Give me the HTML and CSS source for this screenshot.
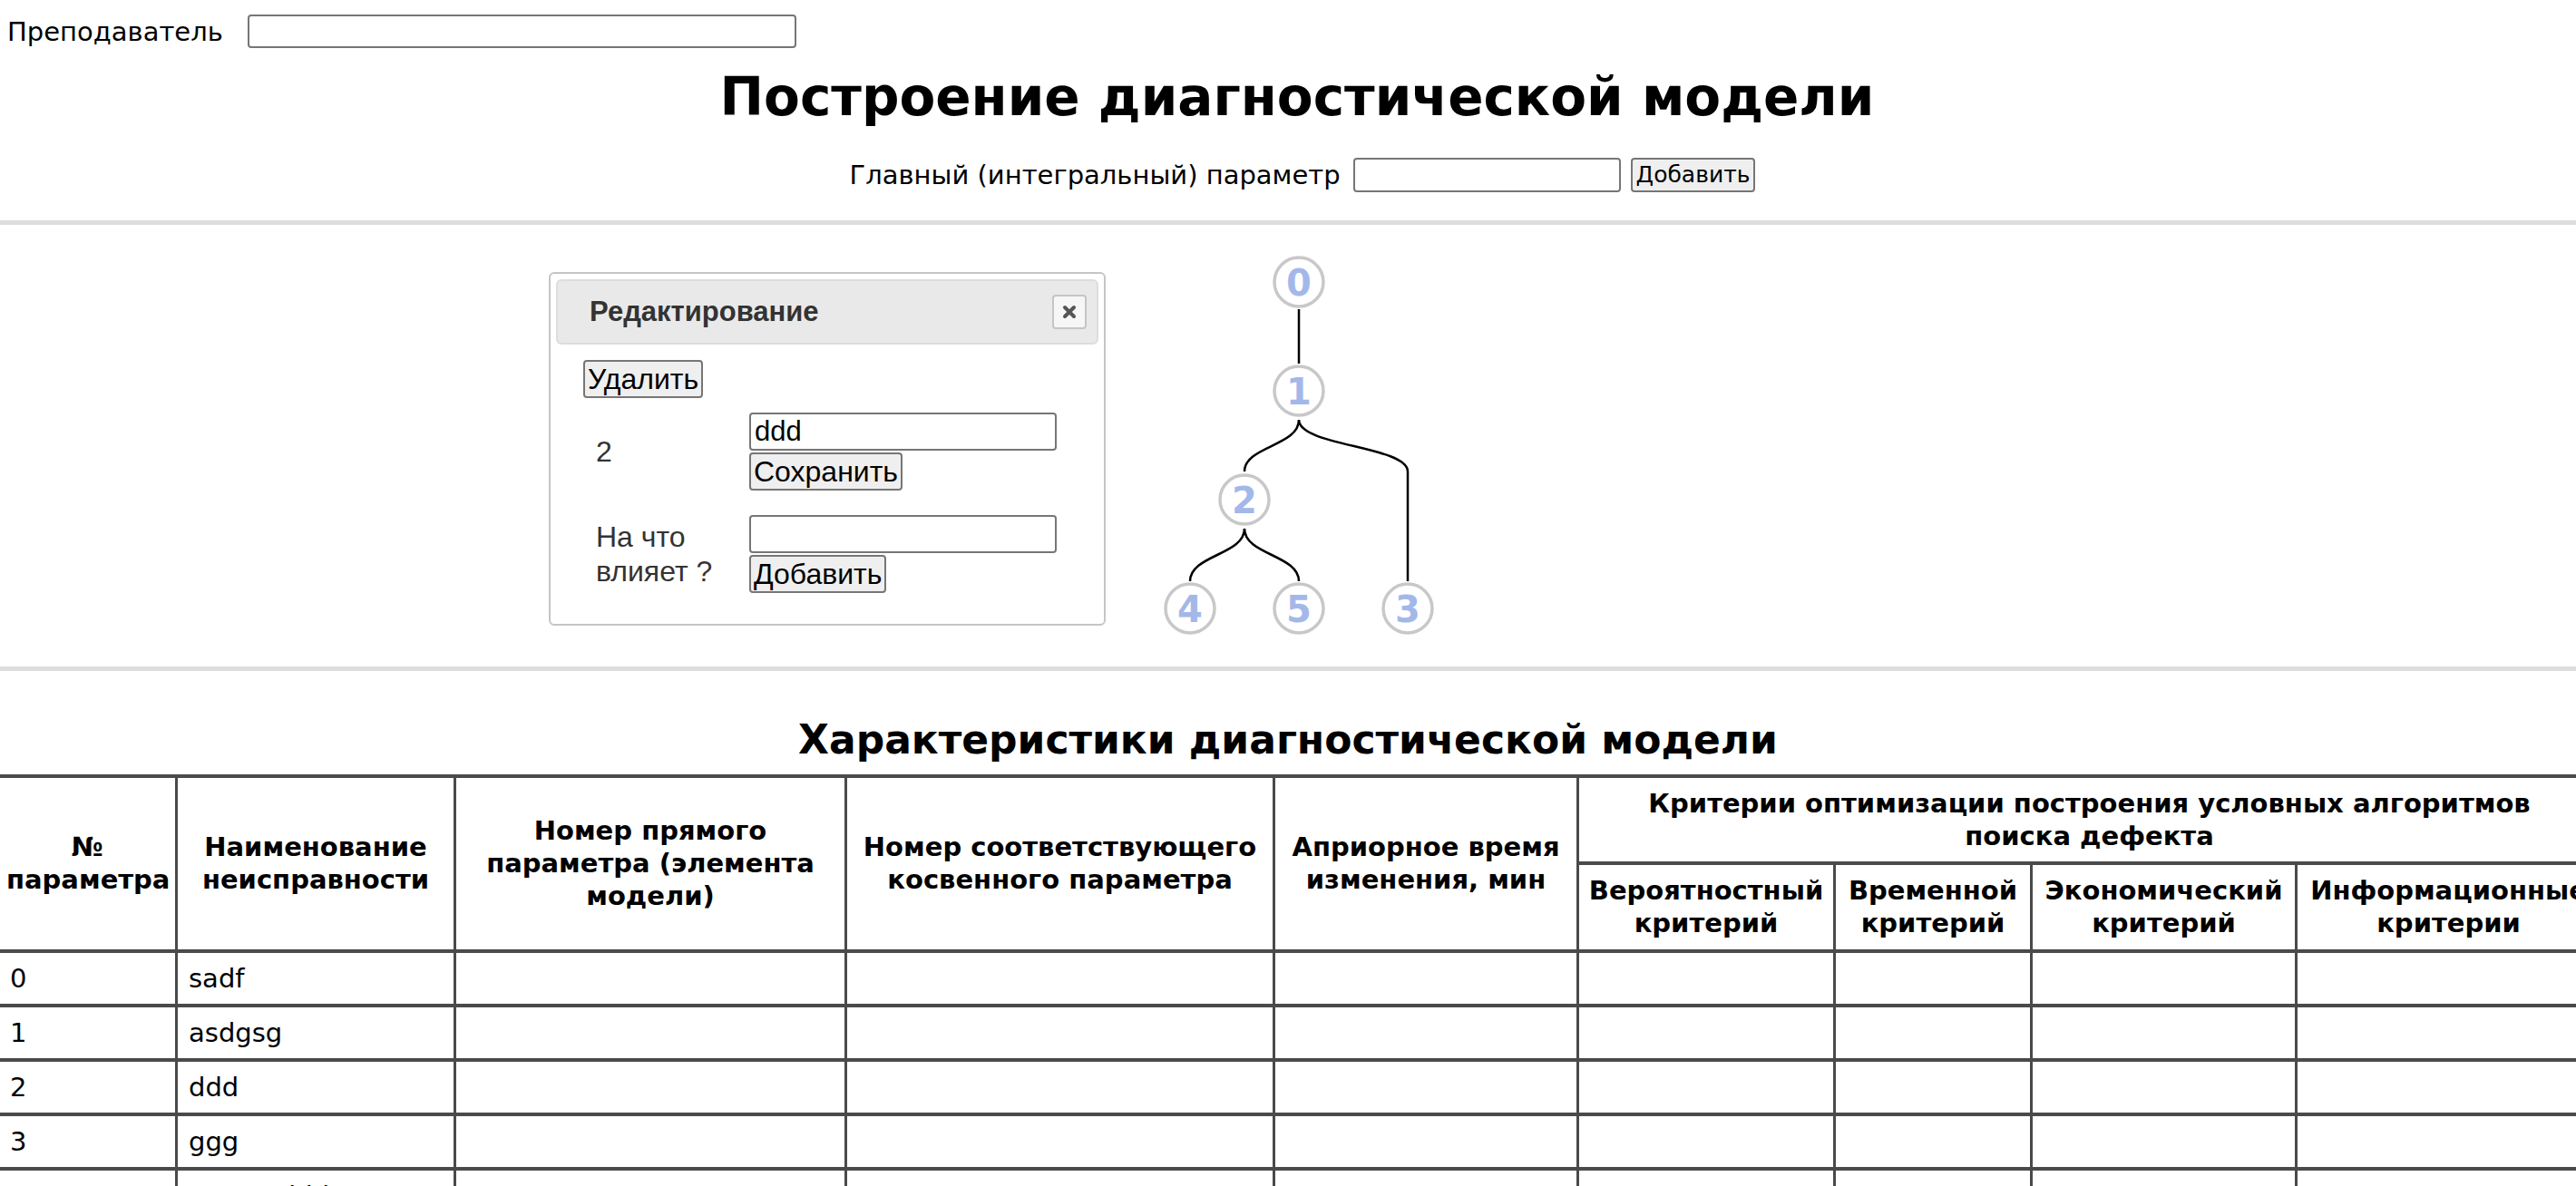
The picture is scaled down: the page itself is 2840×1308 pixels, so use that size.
FILE: index.html
```html
<!DOCTYPE html>
<html lang="ru">
<head>
    <meta charset="UTF-8">
    <title>Построение диагностической модели</title>
    <link rel="stylesheet" href="styles.css">
</head>
<body>
    <div class="teacher">
        <label for="teacher">Преподаватель</label>
        <input type="text" id="teacher" class="teacher-input">
    </div>

    <h1>Построение диагностической модели</h1>

    <div class="main-param">
        <label for="main_param">Главный (интегральный) параметр</label>
        <input type="text" id="main_param" class="main-param-input">
        <button type="button" class="page-button">Добавить</button>
    </div>

    <div class="divider"></div>

    <div class="editor">
        <div class="dialog">
            <div class="dialog-title">
                <span>Редактирование</span>
                <button type="button" class="dialog-close" title="Закрыть">
                    <svg width="16" height="16" viewBox="0 0 16 16">
                        <path d="M3 3 L13 13 M13 3 L3 13" stroke="#555" stroke-width="4" stroke-linecap="round"/>
                    </svg>
                </button>
            </div>
            <div class="dialog-body">
                <button type="button" class="dialog-button">Удалить</button>
                <div class="dialog-form">
                    <div class="dialog-label">2</div>
                    <div class="dialog-field">
                        <input type="text" class="dialog-input" value="ddd">
                        <button type="button" class="dialog-button">Сохранить</button>
                    </div>
                    <div class="dialog-label">На что<br>влияет ?</div>
                    <div class="dialog-field">
                        <input type="text" class="dialog-input">
                        <button type="button" class="dialog-button">Добавить</button>
                    </div>
                </div>
            </div>
        </div>

        <svg class="tree" width="330" height="425" viewBox="0 0 330 425">
            <g class="links">
                <path d="M162 63 L162 123"/>
                <path d="M162 185 C162 214 102 214 102 242"/>
                <path d="M162 185 C162 214 282 214 282 242 L282 363"/>
                <path d="M102 305 C102 334 42 334 42 363"/>
                <path d="M102 305 C102 334 162 334 162 363"/>
            </g>
            <g class="node"><circle cx="162" cy="33" r="27"/><text x="162" y="48">0</text></g>
            <g class="node"><circle cx="162" cy="153" r="27"/><text x="162" y="168">1</text></g>
            <g class="node"><circle cx="102" cy="273" r="27"/><text x="102" y="288">2</text></g>
            <g class="node"><circle cx="42" cy="393" r="27"/><text x="42" y="408">4</text></g>
            <g class="node"><circle cx="162" cy="393" r="27"/><text x="162" y="408">5</text></g>
            <g class="node"><circle cx="282" cy="393" r="27"/><text x="282" y="408">3</text></g>
        </svg>
    </div>

    <div class="divider"></div>

    <h2>Характеристики диагностической модели</h2>

    <table class="model-table">
        <colgroup>
            <col style="width: 197px">
            <col style="width: 307px">
            <col style="width: 431px">
            <col style="width: 472px">
            <col style="width: 335px">
            <col style="width: 283px">
            <col style="width: 217px">
            <col style="width: 292px">
            <col style="width: 336px">
        </colgroup>
        <thead>
            <tr class="head-top">
                <th rowspan="2">№ параметра</th>
                <th rowspan="2">Наименование неисправности</th>
                <th rowspan="2">Номер прямого параметра (элемента модели)</th>
                <th rowspan="2">Номер соответствующего косвенного параметра</th>
                <th rowspan="2">Априорное время изменения, мин</th>
                <th colspan="4" class="criteria-head">Критерии оптимизации построения условных алгоритмов поиска дефекта</th>
            </tr>
            <tr class="head-sub">
                <th>Вероятностный критерий</th>
                <th>Временной критерий</th>
                <th>Экономический критерий</th>
                <th>Информационные критерии</th>
            </tr>
        </thead>
        <tbody>
            <tr><td>0</td><td>sadf</td><td></td><td></td><td></td><td></td><td></td><td></td><td></td></tr>
            <tr><td>1</td><td>asdgsg</td><td></td><td></td><td></td><td></td><td></td><td></td><td></td></tr>
            <tr><td>2</td><td>ddd</td><td></td><td></td><td></td><td></td><td></td><td></td><td></td></tr>
            <tr><td>3</td><td>ggg</td><td></td><td></td><td></td><td></td><td></td><td></td><td></td></tr>
            <tr><td>4</td><td>ssssss ddd</td><td></td><td></td><td></td><td></td><td></td><td></td><td></td></tr>
        </tbody>
    </table>
</body>
</html>
```

FILE: styles.css
```css
html {
    overflow: hidden;
}

body {
    margin: 0;
    font-family: "DejaVu Sans", Verdana, sans-serif;
    font-size: 29px;
    color: #000;
    background: #fff;
}

input[type="text"] {
    box-sizing: border-box;
    border: 2px solid #767676;
    border-radius: 4px;
    background: #fff;
    padding: 0 4px;
    outline: none;
}

/* top row */
.teacher {
    display: flex;
    align-items: center;
    padding: 16px 0 0 8px;
}

.teacher-input {
    width: 605px;
    height: 37px;
    margin-left: 27px;
}

h1 {
    margin: 18px 0 0;
    padding-left: 20px;
    font-size: 58px;
    line-height: 1.25;
    text-align: center;
}

.main-param {
    display: flex;
    justify-content: center;
    align-items: center;
    margin-top: 30px;
    padding-left: 32px;
}

.main-param-input {
    width: 295px;
    height: 38px;
    margin-left: 14px;
}

.page-button {
    height: 38px;
    margin-left: 11px;
    padding: 0 4px;
    font-family: "DejaVu Sans", sans-serif;
    font-size: 25px;
    background: #efefef;
    border: 2px solid #767676;
    border-radius: 4px;
    color: #000;
}

.divider {
    height: 5px;
    background: #dddddd;
    margin-top: 31px;
}

/* editor: dialog + tree */
.editor {
    display: flex;
    align-items: flex-start;
    gap: 51px;
    padding: 30px 0 32px 605px;
}

.editor + .divider {
    margin-top: 0;
}

.dialog {
    box-sizing: border-box;
    width: 614px;
    height: 390px;
    margin-top: 22px;
    padding: 6px;
    border: 2px solid #c5c5c5;
    border-radius: 6px;
    font-family: "Liberation Sans", Arial, sans-serif;
    font-size: 32px;
    color: #333;
}

.dialog-title {
    display: flex;
    justify-content: space-between;
    align-items: center;
    height: 72px;
    box-sizing: border-box;
    padding: 0 11px 0 35px;
    background: #e9e9e9;
    border: 2px solid #dddddd;
    border-radius: 6px;
    font-weight: bold;
    font-size: 31px;
}

.dialog-close {
    display: flex;
    align-items: center;
    justify-content: center;
    width: 38px;
    height: 38px;
    padding: 0;
    background: #f6f6f6;
    border: 2px solid #c5c5c5;
    border-radius: 4px;
}

.dialog-body {
    padding: 17px 0 0 30px;
}

.dialog-button {
    height: 42px;
    padding: 0 3px;
    font-family: "Liberation Sans", Arial, sans-serif;
    font-size: 32px;
    line-height: 1;
    color: #000;
    background: #efefef;
    border: 2px solid #767676;
    border-radius: 4px;
}

.dialog-form {
    display: grid;
    grid-template-columns: 183px auto;
    row-gap: 27px;
    align-items: center;
    margin-top: 16px;
}

.dialog-label {
    padding-left: 14px;
    line-height: 38px;
}

.dialog-field {
    display: flex;
    flex-direction: column;
    align-items: flex-start;
    gap: 2px;
}

.dialog-input {
    width: 339px;
    height: 42px;
    font-family: "Liberation Sans", Arial, sans-serif;
    font-size: 31px;
    color: #000;
}

.tree .links path {
    fill: none;
    stroke: #000;
    stroke-width: 2.5;
}

.tree .node circle {
    fill: #fff;
    stroke: #c8c8c8;
    stroke-width: 3.5;
}

.tree .node text {
    font-family: "DejaVu Sans", sans-serif;
    font-weight: bold;
    font-size: 40px;
    fill: #a3b8e9;
    text-anchor: middle;
}

/* table */
h2 {
    margin: 46px 0 0;
    font-size: 44px;
    line-height: 60px;
    text-align: center;
}

.model-table {
    table-layout: fixed;
    width: 2870px;
    margin: 8px 0 0 -4px;
    border-collapse: collapse;
}

.model-table th,
.model-table td {
    border: 3px solid #4a4a4a;
    border-top-width: 4px;
    border-bottom-width: 4px;
}

.model-table th {
    padding: 0 8px;
    font-weight: bold;
    line-height: 36px;
    text-align: center;
}

.model-table .criteria-head {
    padding: 0 40px;
}

.head-top {
    height: 96px;
}

.head-sub {
    height: 97px;
}

.model-table td {
    height: 56px;
    padding: 0 12px;
    line-height: 36px;
}
```
